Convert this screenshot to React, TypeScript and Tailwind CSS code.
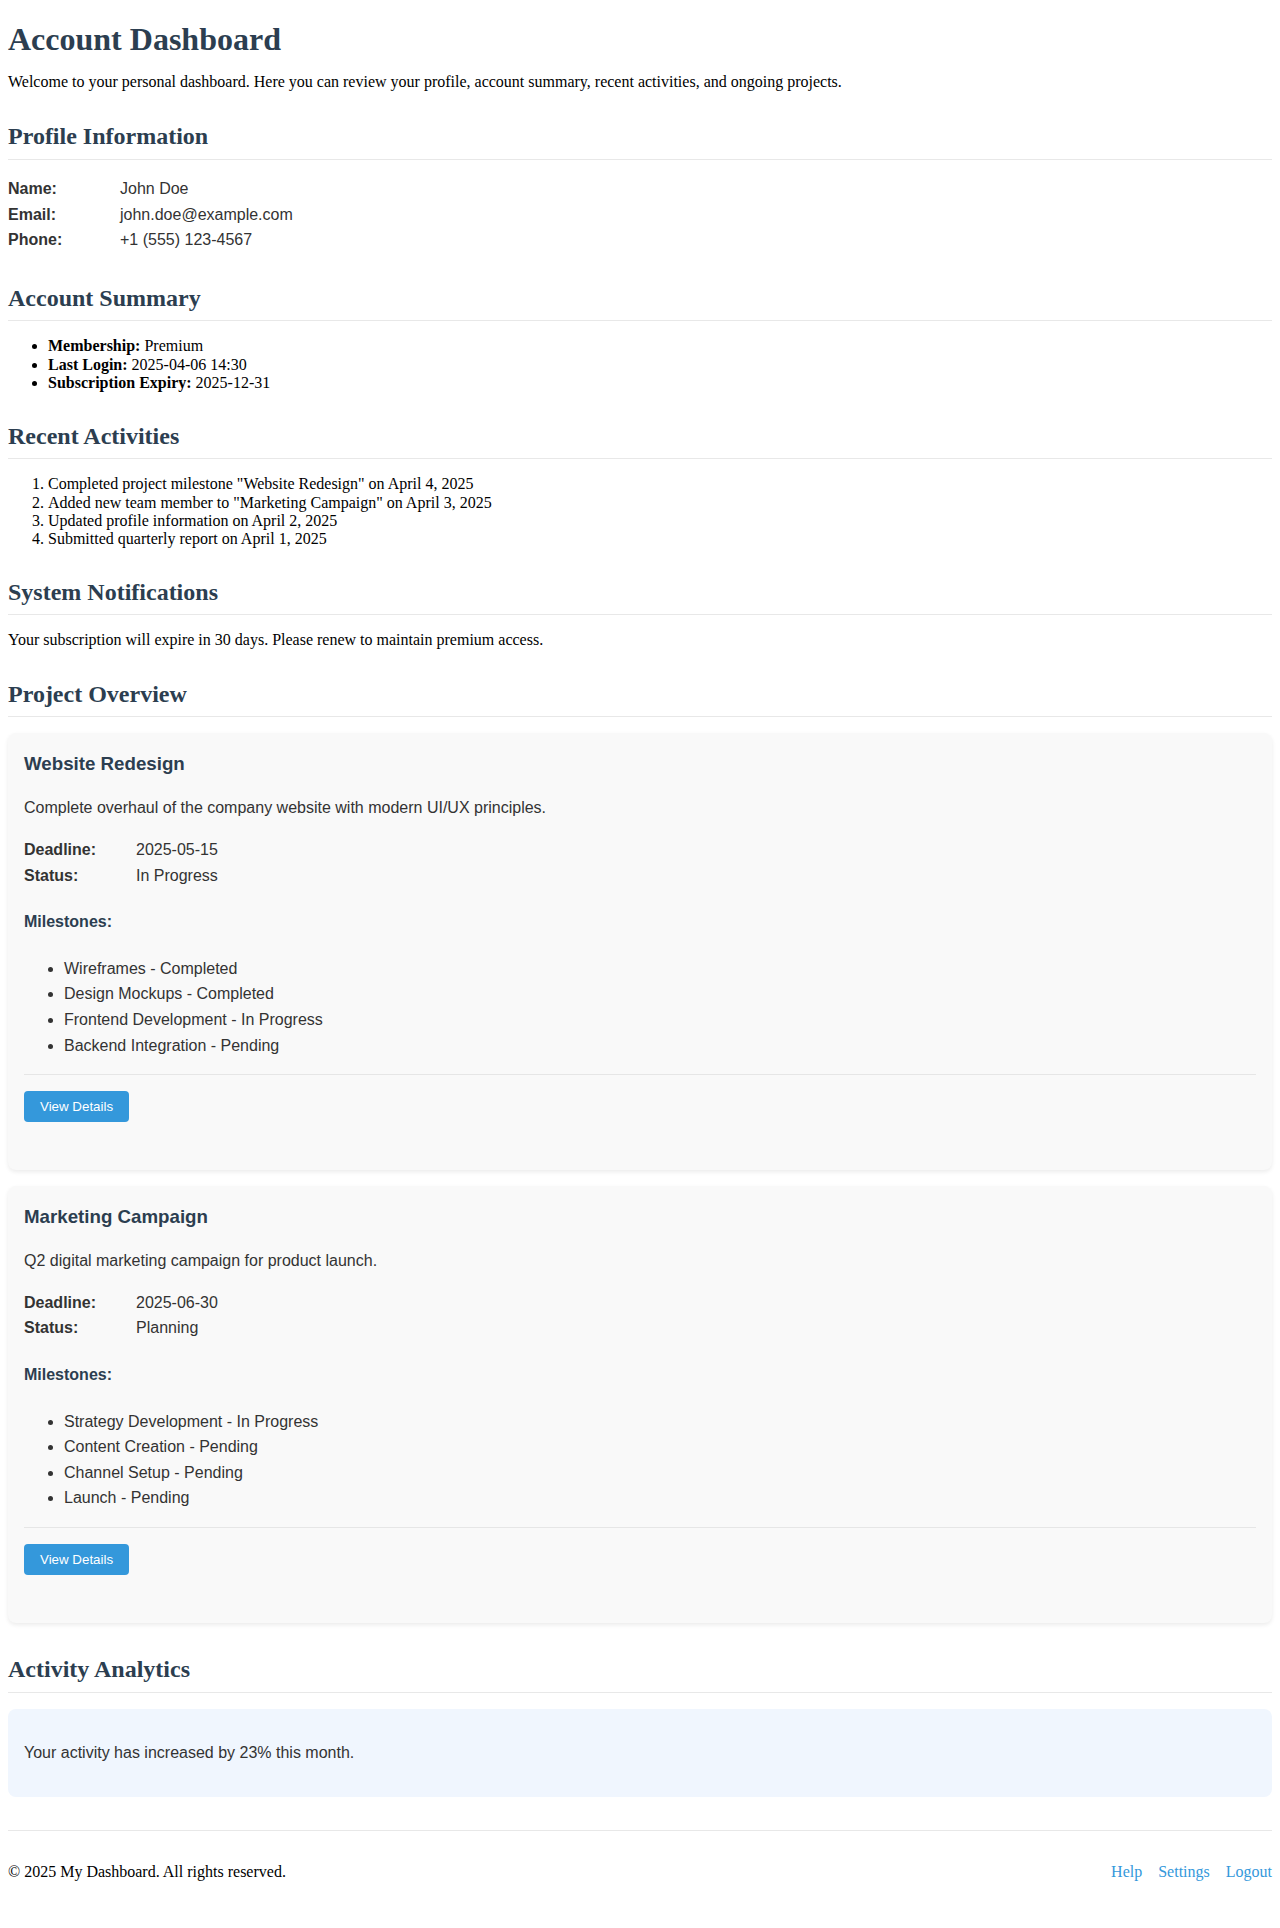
const serif = "font-['Liberation_Serif','Times_New_Roman',serif]";
const sans = "font-['Liberation_Sans',Arial,sans-serif]";

const profile = [
  { label: "Name:", value: "John Doe" },
  { label: "Email:", value: "john.doe@example.com" },
  { label: "Phone:", value: "+1 (555) 123-4567" },
];

const activities = [
  'Completed project milestone "Website Redesign" on April 4, 2025',
  'Added new team member to "Marketing Campaign" on April 3, 2025',
  "Updated profile information on April 2, 2025",
  "Submitted quarterly report on April 1, 2025",
];

const projects = [
  {
    title: "Website Redesign",
    description: "Complete overhaul of the company website with modern UI/UX principles.",
    deadline: "2025-05-15",
    status: "In Progress",
    milestones: [
      "Wireframes - Completed",
      "Design Mockups - Completed",
      "Frontend Development - In Progress",
      "Backend Integration - Pending",
    ],
  },
  {
    title: "Marketing Campaign",
    description: "Q2 digital marketing campaign for product launch.",
    deadline: "2025-06-30",
    status: "Planning",
    milestones: [
      "Strategy Development - In Progress",
      "Content Creation - Pending",
      "Channel Setup - Pending",
      "Launch - Pending",
    ],
  },
];

function SectionTitle({ children }: { children: React.ReactNode }) {
  return (
    <h2 className="text-[24px] leading-[27.6px] font-bold text-[#2c3e50] pb-2 border-b border-[#e8e8e8] mb-4">
      {children}
    </h2>
  );
}

function InfoRow({ label, value }: { label: string; value: string }) {
  return (
    <div className="flex leading-[25.6px]">
      <span className="w-[112px] font-bold">{label}</span>
      <span>{value}</span>
    </div>
  );
}

function ProjectCard({ project }: { project: (typeof projects)[number] }) {
  return (
    <div className={`${sans} text-[16px] text-[#333] bg-[#f9f9f9] rounded-lg shadow-[0_2px_4px_rgba(0,0,0,0.08)] p-4`}>
      <h3 className="text-[18.72px] leading-[30px] font-bold text-[#2c3e50] mb-4">{project.title}</h3>
      <p className="leading-[25.6px] mb-4">{project.description}</p>
      <InfoRow label="Deadline:" value={project.deadline} />
      <InfoRow label="Status:" value={project.status} />
      <h4 className="leading-[25.6px] font-bold text-[#2c3e50] mt-[21px] mb-[21px]">Milestones:</h4>
      <ul className="list-disc pl-10 leading-[25.6px]">
        {project.milestones.map((m) => (
          <li key={m}>{m}</li>
        ))}
      </ul>
      <div className="mt-4 border-t border-[#e6e6e6] pt-4 pb-8 flex">
        <button className="h-[31px] px-4 rounded bg-[#3498db] text-white text-[13.33px] leading-[15px]">
          View Details
        </button>
      </div>
    </div>
  );
}

export default function App() {
  return (
    <div className={`${serif} bg-white text-black text-[16px] px-2 pt-[21px] pb-[40px] min-h-[1928px]`}>
      {/* Header */}
      <h1 className="text-[32px] leading-[37px] font-bold text-[#2c3e50] mb-[15px]">Account Dashboard</h1>
      <p className="leading-[18.4px] mb-8">
        Welcome to your personal dashboard. Here you can review your profile, account summary, recent activities, and ongoing projects.
      </p>

      {/* Profile */}
      <section className="mb-8">
        <SectionTitle>Profile Information</SectionTitle>
        <div className={`${sans} text-[#333]`}>
          {profile.map((p) => (
            <InfoRow key={p.label} label={p.label} value={p.value} />
          ))}
        </div>
      </section>

      {/* Summary */}
      <section className="mb-[30px]">
        <SectionTitle>Account Summary</SectionTitle>
        <ul className="list-disc pl-10 leading-[18.4px]">
          <li><b>Membership:</b> Premium</li>
          <li><b>Last Login:</b> 2025-04-06 14:30</li>
          <li><b>Subscription Expiry:</b> 2025-12-31</li>
        </ul>
      </section>

      {/* Activities */}
      <section className="mb-[30px]">
        <SectionTitle>Recent Activities</SectionTitle>
        <ol className="list-decimal pl-10 leading-[18.4px]">
          {activities.map((a) => (
            <li key={a}>{a}</li>
          ))}
        </ol>
      </section>

      {/* Notifications */}
      <section className="mb-[31px]">
        <SectionTitle>System Notifications</SectionTitle>
        <p className="leading-[18.4px]">Your subscription will expire in 30 days. Please renew to maintain premium access.</p>
      </section>

      {/* Projects */}
      <section className="mb-[33px] flex flex-col">
        <SectionTitle>Project Overview</SectionTitle>
        <div className="flex flex-col gap-4">
          {projects.map((p) => (
            <ProjectCard key={p.title} project={p} />
          ))}
        </div>
      </section>

      {/* Analytics */}
      <section className="mb-[33px]">
        <SectionTitle>Activity Analytics</SectionTitle>
        <div className={`${sans} text-[#333] bg-[#f0f6fe] rounded-lg h-[88px] px-4 flex items-center`}>
          Your activity has increased by 23% this month.
        </div>
      </section>

      {/* Footer */}
      <footer className="border-t border-[#e8e8e8] pt-[32px] flex justify-between items-center leading-[18.4px]">
        <p>© 2025 My Dashboard. All rights reserved.</p>
        <div className="flex gap-4 text-[#3498db]">
          <a href="#">Help</a>
          <a href="#">Settings</a>
          <a href="#">Logout</a>
        </div>
      </footer>
    </div>
  );
}
